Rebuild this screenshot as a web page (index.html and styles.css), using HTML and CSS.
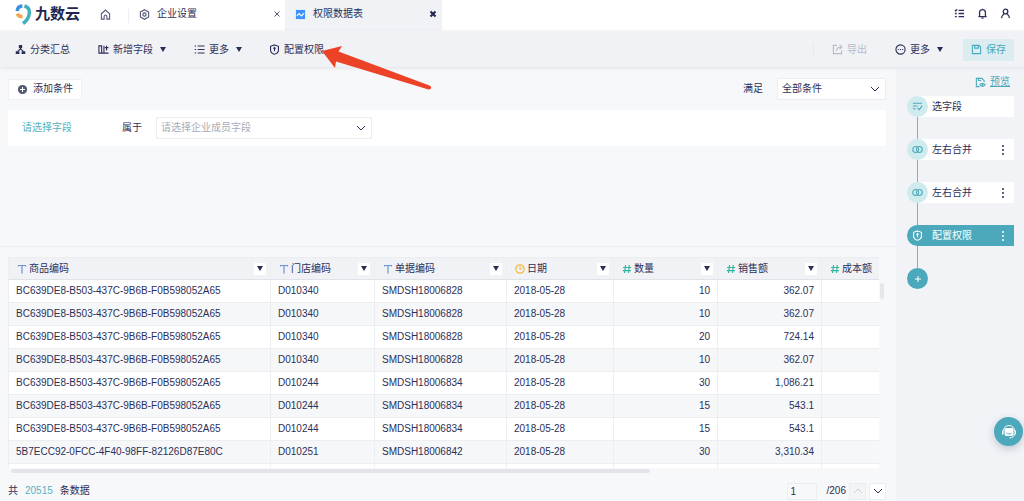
FILE: index.html
```
<!DOCTYPE html>
<html lang="zh-CN">
<head>
<meta charset="utf-8">
<title>九数云</title>
<link rel="stylesheet" href="styles.css">
</head>
<body>
<svg class="defs" width="0" height="0" aria-hidden="true">
  <symbol id="chev" viewBox="0 0 10 10"><path d="M1 3l4 4 4-4"/></symbol>
  <symbol id="shield" viewBox="0 0 12 12"><path d="M6 1l4.300 1.500v4.200C10.300 9 8 10.500 6 11.200 4 10.500 1.700 9 1.700 6.700V2.500zM6 4v4M4.800 5L6 3.900 7.200 5"/></symbol>
  <symbol id="merge" viewBox="0 0 12 12"><circle cx="4" cy="6" r="3.200"/><circle cx="8" cy="6" r="3.200"/></symbol>
  <symbol id="text" viewBox="0 0 10 10"><path d="M1 1.500h8M5 1.500V9.500M1.500 1v1.500M8.500 1v1.500"/></symbol>
  <symbol id="num" viewBox="0 0 10 10"><path d="M3.500 1l-.8 8M7.300 1l-.8 8M1 3.500h8.200M.8 6.700H9"/></symbol>
  <symbol id="clock" viewBox="0 0 10 10"><circle cx="5" cy="5" r="4.200"/><path d="M5 2.500V5h2.200"/></symbol>
</svg>
<div class="app">
  <header class="topbar">
    <a class="logo" href="#">
      <svg width="17" height="22" viewBox="0 0 17 22" aria-hidden="true"><path d="M2.200 8.200C2.400 5 4.400 3 7.400 2.900" stroke="#3d8fe0"/><path d="M2.300 10.800c.9 2 2.900 3 5.300 2.700" stroke="#f3a64a"/><path d="M9.400 3c3.600.8 5.300 3.700 4.900 7.500C13.900 14.500 11.500 18 8 20.500" stroke="#43b0bf"/></svg>
      <span>九数云</span>
    </a>
    <a class="home" href="#" aria-label="首页"><svg class="ic" viewBox="0 0 12 12"><path d="M1.500 5.200L6 1.200l4.500 4V11h-3V8a1.500 1.500 0 0 0-3 0v3h-3z"/></svg></a>
    <nav class="tabs">
      <div class="tab">
        <svg class="ic" viewBox="0 0 12 12"><path d="M6 .8l4.500 2.600v5.200L6 11.200 1.500 8.600V3.400z"/><circle cx="6" cy="6" r="1.800"/></svg>
        <a href="#">企业设置</a>
        <button aria-label="关闭"><svg viewBox="0 0 8 8"><path d="M1.500 1.500l5 5M6.500 1.500l-5 5"/></svg></button>
      </div>
      <div class="tab active">
        <svg class="ic chart" viewBox="0 0 12 12"><rect x="1" y="1" width="10" height="10" fill="#3f93ff" stroke="none"/><path d="M2 7.500l2.500-2.500 2.500 2.500L10 4.500" stroke="#fff"/></svg>
        <a href="#">权限数据表</a>
        <button aria-label="关闭"><svg viewBox="0 0 8 8"><path d="M1.500 1.500l5 5M6.500 1.500l-5 5"/></svg></button>
      </div>
    </nav>
    <div class="user">
      <button aria-label="任务"><svg class="ic" viewBox="0 0 12 12"><path d="M5 2.500h6M5 6h6M5 9.500h6M1 2.200l1 1L3.500 1.500M1 6h2M1 9.500h2"/></svg></button>
      <button aria-label="通知"><svg class="ic" viewBox="0 0 12 12"><path d="M1.500 9.300h9M2.800 9V5a3.200 3.200 0 0 1 6.400 0v4M5 11h2M6 .8v1"/></svg></button>
      <button aria-label="账户"><svg class="ic" viewBox="0 0 12 12"><circle cx="6" cy="3.800" r="2.500"/><path d="M1.600 11c.2-2.300 1.400-3.800 2.900-4.800M10.400 11c-.2-2.300-1.400-3.800-2.900-4.800"/></svg></button>
    </div>
  </header>

  <div class="toolbar">
    <button class="t1"><svg class="ic" viewBox="0 0 12 12"><g fill="currentColor" stroke="none"><path d="M4.200 1h3.600v3.500H4.200zM.8 7.800h4V11h-4zM7.200 7.800h4V11h-4z"/></g><path d="M6 4v2M2.800 8l3.200-2.500L9.200 8"/></svg>分类汇总</button>
    <button class="t2"><svg class="ic" viewBox="0 0 12 12"><path d="M1 2h3v8H1zM6.500 2v8M4 10h7.500M9.300 2v5M7.500 4h4"/></svg>新增字段<i class="caret"></i></button>
    <button class="t3"><svg class="ic" viewBox="0 0 12 12"><path d="M4 2.200h7.500M4 6h7.500M4 9.800h7.500M.8 2.200h1.500M.8 6h1.500M.8 9.800h1.500"/></svg>更多<i class="caret"></i></button>
    <button class="t4"><svg class="ic"><use href="#shield"/></svg>配置权限</button>
    <div class="actions">
      <button class="export" disabled><svg class="ic" viewBox="0 0 12 12"><path d="M5.500 1.500h-4v9h9V7M5 7.500c0-3 2-4.200 5.500-4.200M8.300 1l2.500 2.300L8.300 5.600"/></svg>导出</button>
      <button><svg class="ic" viewBox="0 0 12 12"><circle cx="6" cy="6" r="5"/><path d="M3 6h1.200M5.400 6h1.200M7.800 6H9"/></svg>更多<i class="caret"></i></button>
      <button class="save"><svg class="ic" viewBox="0 0 12 12"><path d="M1.500 1.500h7.200l1.800 1.800v7.200h-9zM4 1.500v3h4v-3"/></svg>保存</button>
    </div>
  </div>

  <div class="body">
    <main>
      <section class="filters">
        <div class="filterhead">
          <button class="add"><svg class="ic" viewBox="0 0 12 12"><circle cx="6" cy="6" r="5" fill="#505872" stroke="none"/><path d="M6 3.300v5.400M3.300 6h5.400" stroke="#fff"/></svg>添加条件</button>
          <label class="match" for="match">满足</label>
          <div class="select s1"><select id="match"><option>全部条件</option></select><svg><use href="#chev"/></svg></div>
        </div>
        <div class="condition">
          <button class="field">请选择字段</button>
          <label for="member">属于</label>
          <div class="select s2"><select id="member"><option>请选择企业成员字段</option></select><svg><use href="#chev"/></svg></div>
        </div>
      </section>
      <section class="data">
        <div class="scroller">
          <table>
            <colgroup><col class="c1"><col class="c2"><col class="c3"><col class="c4"><col class="c5"><col class="c6"><col></colgroup>
            <thead><tr>
              <th><div><svg class="ty"><use href="#text"/></svg>商品编码<button aria-label="筛选"><i class="caret"></i></button></div></th>
              <th><div><svg class="ty"><use href="#text"/></svg>门店编码<button aria-label="筛选"><i class="caret"></i></button></div></th>
              <th><div><svg class="ty"><use href="#text"/></svg>单据编码<button aria-label="筛选"><i class="caret"></i></button></div></th>
              <th><div><svg class="ty date"><use href="#clock"/></svg>日期<button aria-label="筛选"><i class="caret"></i></button></div></th>
              <th><div><svg class="ty num"><use href="#num"/></svg>数量<button aria-label="筛选"><i class="caret"></i></button></div></th>
              <th><div><svg class="ty num"><use href="#num"/></svg>销售额<button aria-label="筛选"><i class="caret"></i></button></div></th>
              <th><div><svg class="ty num"><use href="#num"/></svg>成本额</div></th>
            </tr></thead>
            <tbody>
              <tr><td>BC639DE8-B503-437C-9B6B-F0B598052A65</td><td>D010340</td><td>SMDSH18006828</td><td>2018-05-28</td><td>10</td><td>362.07</td><td></td></tr>
              <tr><td>BC639DE8-B503-437C-9B6B-F0B598052A65</td><td>D010340</td><td>SMDSH18006828</td><td>2018-05-28</td><td>10</td><td>362.07</td><td></td></tr>
              <tr><td>BC639DE8-B503-437C-9B6B-F0B598052A65</td><td>D010340</td><td>SMDSH18006828</td><td>2018-05-28</td><td>20</td><td>724.14</td><td></td></tr>
              <tr><td>BC639DE8-B503-437C-9B6B-F0B598052A65</td><td>D010340</td><td>SMDSH18006828</td><td>2018-05-28</td><td>10</td><td>362.07</td><td></td></tr>
              <tr><td>BC639DE8-B503-437C-9B6B-F0B598052A65</td><td>D010244</td><td>SMDSH18006834</td><td>2018-05-28</td><td>30</td><td>1,086.21</td><td></td></tr>
              <tr><td>BC639DE8-B503-437C-9B6B-F0B598052A65</td><td>D010244</td><td>SMDSH18006834</td><td>2018-05-28</td><td>15</td><td>543.1</td><td></td></tr>
              <tr><td>BC639DE8-B503-437C-9B6B-F0B598052A65</td><td>D010244</td><td>SMDSH18006834</td><td>2018-05-28</td><td>15</td><td>543.1</td><td></td></tr>
              <tr><td>5B7ECC92-0FCC-4F40-98FF-82126D87E80C</td><td>D010251</td><td>SMDSH18006842</td><td>2018-05-28</td><td>30</td><td>3,310.34</td><td></td></tr>
              <tr><td></td><td></td><td></td><td></td><td></td><td></td><td></td></tr>
            </tbody>
          </table>
          <div class="vbar"></div>
        </div>
        <div class="hbar"></div>
        <footer>
          <span>共</span><span class="total">20515</span><span>条数据</span>
          <input class="page" aria-label="页码" value="1"><span class="pages">/206</span>
          <button class="prev" aria-label="上一页" disabled><svg><use href="#chev"/></svg></button>
          <button class="next" aria-label="下一页"><svg><use href="#chev"/></svg></button>
        </footer>
      </section>
    </main>

    <aside>
      <a class="preview" href="#"><svg class="ic" viewBox="0 0 12 12"><path d="M5 10.500H1.500v-9h6l2.500 2.500v1.500M3.800 1.800v2h3"/><path d="M5.200 8.500c1.500-2.300 4.500-2.300 6 0-1.500 2.300-4.500 2.300-6 0z"/><circle cx="8.200" cy="8.500" r=".6"/></svg><span>预览</span></a>
      <ol class="steps">
        <li><span class="dot"><svg class="ic" viewBox="0 0 12 12"><path d="M1 2.500h10M1 5.500h5M1 8.500h3M6 7.500l2 2L11 5"/></svg></span><span class="name">选字段</span></li>
        <li><span class="dot"><svg class="ic"><use href="#merge"/></svg></span><span class="name">左右合并</span><button aria-label="菜单"><svg viewBox="0 0 4 12"><circle cx="2" cy="2" r="1"/><circle cx="2" cy="6" r="1"/><circle cx="2" cy="10" r="1"/></svg></button></li>
        <li><span class="dot"><svg class="ic"><use href="#merge"/></svg></span><span class="name">左右合并</span><button aria-label="菜单"><svg viewBox="0 0 4 12"><circle cx="2" cy="2" r="1"/><circle cx="2" cy="6" r="1"/><circle cx="2" cy="10" r="1"/></svg></button></li>
        <li class="current"><span class="dot"><svg class="ic"><use href="#shield"/></svg></span><span class="name">配置权限</span><button aria-label="菜单"><svg viewBox="0 0 4 12"><circle cx="2" cy="2" r="1"/><circle cx="2" cy="6" r="1"/><circle cx="2" cy="10" r="1"/></svg></button></li>
      </ol>
      <button class="plus" aria-label="添加步骤"><svg viewBox="0 0 8 8"><path d="M4 1v6M1 4h6"/></svg></button>
    </aside>
  </div>

  <button class="help" aria-label="客服"><svg width="16" height="16" viewBox="0 0 16 16"><path d="M2.500 7a5.500 5.500 0 0 1 11 0M13.500 10c-.3 2.500-2 3.800-5 4" fill="none" stroke="#fff" stroke-width="1"/><path d="M5 4h6a1.500 1.500 0 0 1 1.500 1.500V10a2 2 0 0 1-2 2h-5a2 2 0 0 1-2-2V5.500A1.500 1.500 0 0 1 5 4zM1 6.500h1.500v4H1zM13.500 6.500H15v4h-1.500z" fill="#fff"/><path d="M5.500 9c1 1.300 4 1.300 5 0" fill="none" stroke="#4ba9bb"/></svg></button>
  <svg class="pointer" width="114" height="48" viewBox="0 0 114 48" aria-hidden="true"><path d="M2 8L22 3l-3.500 5.500L109.500 42.500c2.500 1 2 4-1 4L16 18.500 15 25z"/></svg>
</div>
</body>
</html>
```
FILE: styles.css
```
* { box-sizing: border-box; }
body { margin: 0; font: 10px/14px "Liberation Sans", "Noto Sans CJK SC", sans-serif; color: #2b2f58; background: #f7f8fa; }
button, input, select { font: inherit; color: inherit; border: 0; background: none; margin: 0; padding: 0; border-radius: 0; }
a { color: inherit; text-decoration: none; }
svg { fill: none; stroke: currentColor; flex: none; display: block; }
.defs { position: absolute; }
.ic { width: 11px; height: 11px; stroke-width: 1.2; }
.caret { width: 6px; height: 5px; background: currentColor; clip-path: polygon(0 0, 100% 0, 50% 100%); }
.app { position: relative; display: flex; flex-direction: column; height: 100vh; overflow: hidden; }

.topbar { display: flex; align-items: center; height: 31px; flex: none; background: #fff; }
.logo { display: flex; align-items: center; width: 84px; padding: 0 0 3px 15px; gap: 3px; font-size: 15px; line-height: 20px; font-weight: 700; white-space: nowrap; color: #20244e; }
.logo svg { stroke-width: 3.5; }
.home { width: 45px; padding: 0 0 3px 16px; border-right: 1px solid #eeeff3; color: #555a78; }
.tabs { display: flex; height: 100%; }
.tab { display: flex; align-items: center; width: 156px; padding: 0 4px 3px 10px; gap: 7px; }
.tab a { flex: 1; }
.tab svg { color: #50546f; }
.tab button svg { width: 8px; height: 8px; }
.tab.active { width: 157px; padding-right: 5px; background: #f1f2f6; }
.tab.active button svg { color: #20244e; stroke-width: 2; }
.user { display: flex; gap: 12px; margin-left: auto; padding: 0 13px 4px 0; }
.user svg { stroke-width: 1.4; }

.toolbar { display: flex; align-items: center; flex: none; height: 36px; padding: 1px 10px 0 15px; background: #f1f2f6; box-shadow: 0 1px 4px #dfe1e8; position: relative; }
.toolbar button { display: flex; align-items: center; gap: 4px; }
.toolbar .caret { margin-left: 3px; }
.t2, .t3, .t4 { margin-left: 28px; }
.toolbar .t4 { margin-left: 27px; }
.actions { display: flex; align-items: center; gap: 20px; margin-left: auto; }
.toolbar .export { color: #b7bac8; border-left: 1px solid #e8e9ef; padding-left: 18px; margin-right: 8px; }
.toolbar .save { width: 51px; height: 22px; justify-content: center; background: #dcedf1; color: #4ba9bb; }

.body { display: flex; flex: 1; min-height: 0; }
main { flex: 1; min-width: 0; display: flex; flex-direction: column; }
.filters { height: 180px; flex: none; padding: 11px 10px 0 8px; border-bottom: 1px solid #ebedf0; }
.filterhead { display: flex; align-items: center; }
.add { display: flex; align-items: center; gap: 5px; height: 21px; padding: 0 8px; background: #fff; border: 1px solid #eff0f3; }
.match { margin-left: auto; }
.select { position: relative; height: 22px; background: #fff; border: 1px solid #ebedf1; }
.select select { appearance: none; width: 100%; height: 100%; padding: 0 20px 0 4px; }
.select svg { position: absolute; right: 5px; top: 5px; width: 10px; height: 10px; pointer-events: none; }
.s1 { width: 109px; margin-left: 14px; }
.s2 { width: 216px; margin-left: 14px; }
.s2 select { color: #a9acba; }
.condition { display: flex; align-items: center; height: 36px; margin-top: 10px; padding-left: 14px; background: #fff; }
.field { width: 100px; text-align: left; color: #53b3c3; }

.data { flex: 1; min-height: 0; padding: 10px 0 0 8px; display: flex; flex-direction: column; }
.scroller { display: flex; height: 211px; overflow: hidden; }
table { flex: 1; min-width: 0; border-collapse: separate; border-spacing: 0; table-layout: fixed; border-left: 1px solid #eceef2; }
.c1 { width: 262px; } .c2 { width: 104px; } .c3 { width: 132px; } .c4 { width: 107px; } .c5, .c6 { width: 104px; }
th, td { padding: 0 7px; text-align: left; font-weight: 400; border-right: 1px solid #eceef2; border-bottom: 1px solid #eceef2; white-space: nowrap; }
th:last-child, td:last-child { border-right: 0; }
th { height: 23px; background: #f1f2f6; border-top: 1px solid #ebedf1; border-right-color: #eceef2; padding: 0 4px 0 8px; border-bottom-color: #dfe2e7; }
th div { display: flex; align-items: center; gap: 2px; }
th button { display: flex; align-items: center; justify-content: center; width: 12px; height: 12px; margin-left: auto; background: #fff; }
td { height: 23px; }
td:nth-child(5), td:nth-child(6) { text-align: right; }
tbody tr { background: #f6f7f9; }
tbody tr:nth-child(odd) { background: #fff; }
.ty { width: 10px; height: 10px; color: #6b91d8; stroke-width: 1.2; }
.num { color: #36b5a2; }
.date { color: #f5b93d; }
.vbar { width: 4px; height: 16px; margin: 26px 12px 0 1px; border-radius: 2px; background: #e5e7eb; }
.hbar { width: 72%; height: 4px; margin: 1px 0 0 3px; border-radius: 2px; background: #e3e5e8; }
footer { display: flex; align-items: center; flex: none; height: 18px; margin-top: 9px; padding-right: 10px; }
.total { margin: 0 7px; color: #53b3c3; }
.page { width: 30px; height: 17px; margin: 0 0 0 auto; padding-left: 3px; border: 1px solid #ebedf1; }
.pages { margin: 0 3px 0 10px; }
footer button { display: flex; align-items: center; justify-content: center; width: 17px; height: 17px; border: 1px solid #ebedf1; }
footer svg { width: 10px; height: 10px; }
.prev { margin-right: 3px; background: #f3f4f6; color: #c9ccd4; }
.prev svg { transform: rotate(180deg); }
.next { background: #fff; }

aside { width: 128px; padding: 8px 10px 0 11px; background: #f1f3f7; }
.preview { display: flex; justify-content: flex-end; align-items: center; gap: 4px; padding-right: 4px; color: #4ba9bb; }
.preview span { text-decoration: underline; }
.steps { list-style: none; margin: 7px 0 0; padding: 0; }
.steps li { display: flex; align-items: center; height: 21px; margin-bottom: 22px; background: linear-gradient(90deg, #0000 10px, #fff 10px); position: relative; }
.steps li::after { content: ""; position: absolute; left: 10px; top: 21px; width: 1px; height: 22px; background: #6fb6c3; }
.dot, .plus { display: flex; align-items: center; justify-content: center; width: 21px; height: 21px; border-radius: 50%; background: #d0ebee; color: #4ba9bb; }
.name { flex: 1; margin-left: 4px; }
.steps button { width: 4px; margin-right: 9px; }
.steps button svg { width: 4px; height: 12px; fill: currentColor; stroke: none; }
.steps .current { background: #4ba9bb; color: #fff; border-radius: 11px 0 0 11px; }
.current .dot { background: none; color: #fff; }
.plus { background: #4ba9bb; color: #fff; }
.plus svg { width: 8px; height: 8px; }

.help { position: absolute; right: 1px; bottom: 55px; display: flex; align-items: center; justify-content: center; width: 29px; height: 29px; border-radius: 50%; background: #4ba9bb; box-shadow: 0 3px 8px #c3c8d0; }
.help svg { stroke: none; }
.pointer { position: absolute; left: 320px; top: 43px; fill: #ec4328; stroke: none; }
```
